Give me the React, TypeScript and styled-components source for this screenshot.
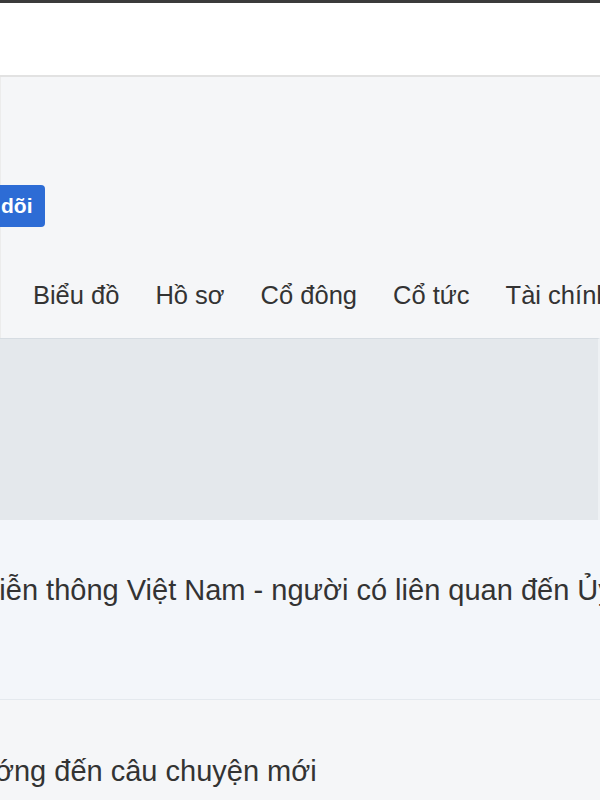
import styled, { createGlobalStyle } from 'styled-components';

const GlobalStyle = createGlobalStyle`
  html, body {
    margin: 0;
    padding: 0;
    background: #f5f6f8;
    font-family: "Liberation Sans", Arial, sans-serif;
    color: #333;
  }
`;

const tabs = ['Tổng quan', 'Biểu đồ', 'Hồ sơ', 'Cổ đông', 'Cổ tức', 'Tài chính', 'Tin tức'];

// the page is scrolled sideways, so titles start left of the viewport
const news = [
  { title: 'Tập đoàn Bưu chính Viễn thông Việt Nam - người có liên quan đến Ủy viên HĐQT - đăng ký bán cổ phiếu', offset: -292, top: 53 },
  { title: 'Ngành viễn thông hướng đến câu chuyện mới', offset: -276, top: 54 },
];

const Page = () => (
  <Wrapper>
    <GlobalStyle />
    <WindowBar />
    <TopNav />
    <CompanyHeader>
      <FollowButton>Theo dõi</FollowButton>
      <TabList>
        {tabs.map(t => (
          <Tab key={t}>{t}</Tab>
        ))}
      </TabList>
    </CompanyHeader>
    <ChartArea />
    <NewsList>
      {news.map((n, idx) => (
        <NewsRow key={idx} first={idx === 0} top={n.top}>
          <NewsTitle offset={n.offset}>{n.title}</NewsTitle>
        </NewsRow>
      ))}
    </NewsList>
  </Wrapper>
);

const Wrapper = styled.div`
  width: 600px;
  height: 800px;
  overflow: hidden;
  background: #f5f6f8;
`;

const WindowBar = styled.div`
  height: 3px;
  background: #3b3b3b;
`;

const TopNav = styled.header`
  height: 72px;
  background: #fff;
  border-bottom: 2px solid #e2e2e2;
`;

const CompanyHeader = styled.section`
  height: 261px;
  box-sizing: border-box;
  padding-top: 108px;
  border-left: 1px solid #ececec;
`;

const FollowButton = styled.button`
  display: block;
  height: 42px;
  margin-left: -68px;
  padding: 0 12px;
  border: 0;
  border-radius: 4px;
  background: #2d6cd5;
  color: #fff;
  font-family: "Liberation Sans", Arial, sans-serif;
  font-size: 21px;
  font-weight: bold;
  white-space: nowrap;
`;

const TabList = styled.nav`
  display: flex;
  gap: 36px;
  margin-top: 43px;
  margin-left: -126px;
  height: 50px;
  white-space: nowrap;
`;

const Tab = styled.div`
  flex: none;
  font-size: 25.5px;
  line-height: 50px;
  color: #333;
`;

const ChartArea = styled.div`
  height: 182px;
  box-sizing: border-box;
  background: #e4e8ec;
  border-top: 1px solid #d6dce2;
  border-right: 2px solid #eef1f4;
`;

const NewsList = styled.div`
  display: flex;
  flex-direction: column;
`;

const NewsRow = styled.div<{ first?: boolean; top: number }>`
  height: ${p => (p.first ? 180 : 140)}px;
  box-sizing: border-box;
  padding-top: ${p => p.top}px;
  overflow: hidden;
  background: ${p => (p.first ? '#f3f6fa' : '#f5f6f8')};
  border-bottom: 1px solid #e4e9ee;
`;

const NewsTitle = styled.div<{ offset: number }>`
  margin-left: ${p => p.offset}px;
  font-size: 29px;
  line-height: 34px;
  white-space: nowrap;
  color: #333;
`;

export default function App() {
  return <Page />;
}
